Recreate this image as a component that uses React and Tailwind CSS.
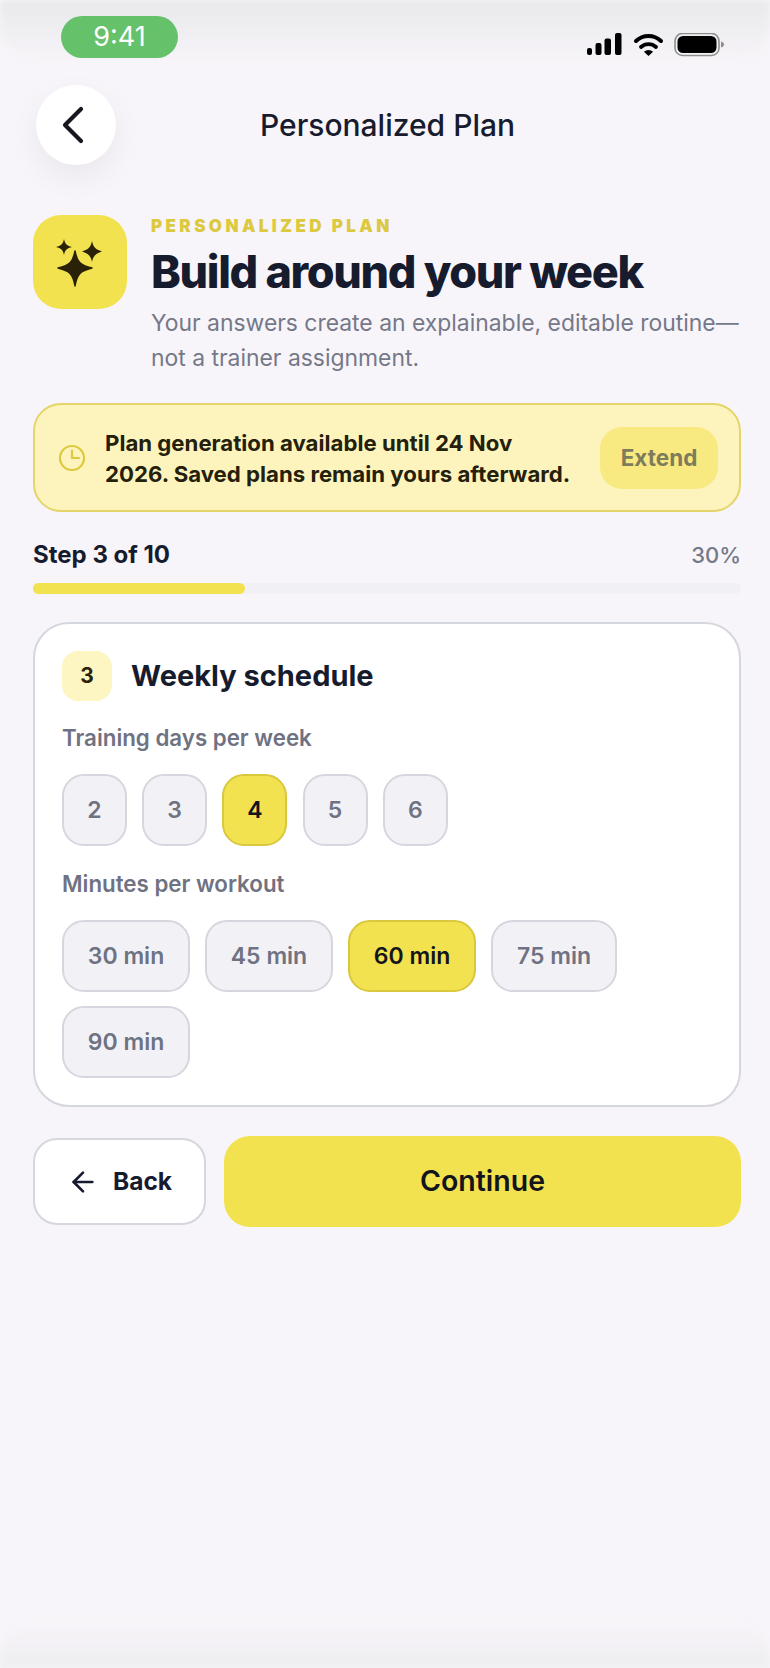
import React from 'react';
import { ArrowLeft } from 'lucide-react';

const StatusIcons = () => (
  <svg width="140" height="26" viewBox="0 0 140 26" className="block">
    <rect x="1" y="15" width="5" height="7" rx="2" fill="#000" />
    <rect x="9.500" y="10" width="6" height="12" rx="2" fill="#000" />
    <rect x="18.500" y="5.500" width="6.500" height="16.500" rx="2" fill="#000" />
    <rect x="29" y="0" width="6.500" height="22" rx="2" fill="#000" />
    <path d="M50 8a18 18 0 0 1 25 0" fill="none" stroke="#000" strokeWidth="4" strokeLinecap="round" />
    <path d="M55 14a11 11 0 0 1 15 0" fill="none" stroke="#000" strokeWidth="3.800" strokeLinecap="round" />
    <path d="M62.500 23l-4.600-4.200a7 7 0 0 1 9.200 0z" fill="#000" />
    <rect x="89" y="0.500" width="44" height="22" rx="7.500" fill="none" stroke="#8e8e8e" strokeWidth="1.600" />
    <rect x="91.500" y="3" width="39" height="17" rx="5.500" fill="#000" />
    <path d="M135 8.500c2 .5 3 1.600 3 3s-1 2.500-3 3z" fill="#8e8e8e" />
  </svg>
);

const BackChevron = () => (
  <svg width="24" height="38" viewBox="0 0 24 38" fill="none" className="mr-[6px] block">
    <path d="M20 3 L4 19 L20 35" stroke="#17171f" strokeWidth="4.200" strokeLinecap="round" strokeLinejoin="round" />
  </svg>
);

const Sparkles = () => (
  <svg width="94" height="94" viewBox="0 0 94 94" className="block">
    <path d="M42 36c2 11 5 14 17 17-12 3-15 6-17 18-2-12-5-15-17-18 12-3 15-6 17-17z" fill="#2a2208" stroke="#2a2208" strokeWidth="1.500" strokeLinejoin="round" />
    <path d="M31 24c1 5 3 7 8 8-5 1-7 3-8 8-1-5-3-7-8-8 5-1 7-3 8-8z" fill="#2a2208" />
    <path d="M59 26c1.200 6 3 8 10 10.500-7 2.500-8.800 4.500-10 10.500-1.200-6-3-8-10-10.500 7-2.500 8.800-4.500 10-10.500z" fill="#2a2208" />
  </svg>
);

const ClockIcon = () => (
  <svg width="28" height="28" viewBox="0 0 28 28" fill="none" className="block shrink-0">
    <circle cx="14" cy="14" r="12" stroke="#dcc93f" strokeWidth="2.200" />
    <path d="M14 6.500V14H21" stroke="#dcc93f" strokeWidth="2.200" strokeLinecap="round" strokeLinejoin="round" />
  </svg>
);

const Chip = ({ label, selected, className }) => (
  <div
    className={`flex h-[72px] items-center justify-center rounded-[22px] border-2 text-[23px] font-semibold ${className} ${
      selected ? 'border-[#d9c73e] bg-[#f2e250] text-[#14141c]' : 'border-[#d6d6de] bg-[#f2f2f6] text-[#6f7282]'
    }`}
  >
    {label}
  </div>
);

export default function App() {
  return (
    <div
      className="relative h-[1668px] w-[770px] overflow-hidden bg-[#f7f5f9] text-[#171b2e]"
      style={{ fontFamily: 'Inter, "Liberation Sans", sans-serif' }}
    >
      {/* device vignette */}
      <div className="pointer-events-none absolute inset-x-0 top-0 h-[64px] rounded-b-[40px] bg-gradient-to-b from-[#e9e8eb] to-[#f7f5f9] blur-[3px]" />
      <div className="pointer-events-none absolute inset-x-0 bottom-0 h-[48px] rounded-t-[40px] bg-gradient-to-t from-[#eeedf0] to-[#f7f5f9] blur-[3px]" />

      <div className="relative">
        <div className="flex items-start justify-between pl-[61px] pr-[44px] pt-[16px]">
          <div className="flex h-[42px] w-[117px] items-center justify-center rounded-[21px] bg-[#65c16a] text-[27px] text-white">
            9:41
          </div>
          <div className="pt-[17px]">
            <StatusIcons />
          </div>
        </div>

        <div className="mt-[26px] grid grid-cols-[80px_1fr_80px] items-center px-[36px]">
          <div className="flex h-[80px] w-[80px] items-center justify-center rounded-full bg-white shadow-[0_12px_32px_rgba(20,20,40,0.06)]">
            <BackChevron />
          </div>
          <div className="pl-[5px] text-center text-[30px] font-medium">Personalized Plan</div>
        </div>

        <div className="mt-[50px] flex gap-[24px] pl-[33px]">
          <div className="h-[94px] w-[94px] shrink-0 rounded-[28px] bg-[#f2e250]">
            <Sparkles />
          </div>
          <div className="w-[592px]">
            <div className="mt-[1px] text-[17px] font-black leading-[20px] tracking-[0.2em] text-[#dcc93f]">
              PERSONALIZED PLAN
            </div>
            <div className="mt-[8px] text-[45px] font-extrabold leading-[56px] tracking-[-0.03em]">
              Build around your week
            </div>
            <div className="mt-[6px] text-[22.900px] leading-[35px] text-[#757888]">
              Your answers create an explainable, editable routine—not a trainer assignment.
            </div>
          </div>
        </div>

        <div className="ml-[33px] mr-[29px] mt-[27px] flex h-[109px] items-center rounded-[28px] border-2 border-[#e5d46a] bg-[#fdf4bd] pl-[23px] pr-[21px]">
          <ClockIcon />
          <div className="ml-[19px] w-[472px] shrink-0 text-[22.200px] font-bold leading-[31px] text-[#24200c]">
            Plan generation available until 24 Nov 2026. Saved plans remain yours afterward.
          </div>
          <div className="ml-auto flex h-[62px] w-[118px] items-center justify-center rounded-[22px] bg-[#f8ea80] text-[22.500px] font-bold text-[#7f7c5c]">
            Extend
          </div>
        </div>

        <div className="ml-[33px] mr-[29px] mt-[28px] flex items-center justify-between leading-[30px]">
          <div className="text-[24px] font-bold">Step 3 of 10</div>
          <div className="text-[22px] font-medium text-[#757888]">30%</div>
        </div>
        <div className="ml-[33px] mr-[29px] mt-[13px] h-[11px] rounded-full bg-[#f1f1f5]">
          <div className="h-full w-[30%] rounded-full bg-[#f2e250]" />
        </div>

        <div className="ml-[33px] mr-[29px] mt-[28px] h-[485px] rounded-[36px] border-2 border-[#d6d6de] bg-white px-[27px] pt-[27px]">
          <div className="flex items-center gap-[19px]">
            <div className="flex h-[50px] w-[50px] items-center justify-center rounded-[16px] bg-[#fdf6c3] text-[21px] font-bold text-[#2a2208]">
              3
            </div>
            <div className="text-[29px] font-bold">Weekly schedule</div>
          </div>

          <div className="mt-[22px] text-[22.300px] font-semibold leading-[30px] text-[#6f7282]">Training days per week</div>
          <div className="mt-[21px] flex gap-[15.200px]">
            {['2', '3', '4', '5', '6'].map((d) => (
              <Chip key={d} label={d} selected={d === '4'} className="w-[65px]" />
            ))}
          </div>

          <div className="mt-[23px] text-[22.300px] font-semibold leading-[30px] text-[#6f7282]">Minutes per workout</div>
          <div className="mt-[21px] flex flex-wrap gap-x-[15px] gap-y-[14px]">
            {['30 min', '45 min', '60 min', '75 min', '90 min'].map((m) => (
              <Chip key={m} label={m} selected={m === '60 min'} className={m === '75 min' ? 'w-[126px]' : 'w-[128px]'} />
            ))}
          </div>
        </div>

        <div className="ml-[33px] mr-[29px] mt-[29px] flex items-center gap-[18px]">
          <div className="flex h-[87px] w-[173px] items-center justify-center gap-[14px] rounded-[24px] border-2 border-[#d6d6de] bg-white text-[24.500px] font-bold">
            <ArrowLeft size={32} strokeWidth={2} />
            Back
          </div>
          <div className="flex h-[91px] flex-1 items-center justify-center rounded-[26px] bg-[#f2e250] text-[28.500px] font-semibold text-[#14141c]">
            Continue
          </div>
        </div>
      </div>
    </div>
  );
}
